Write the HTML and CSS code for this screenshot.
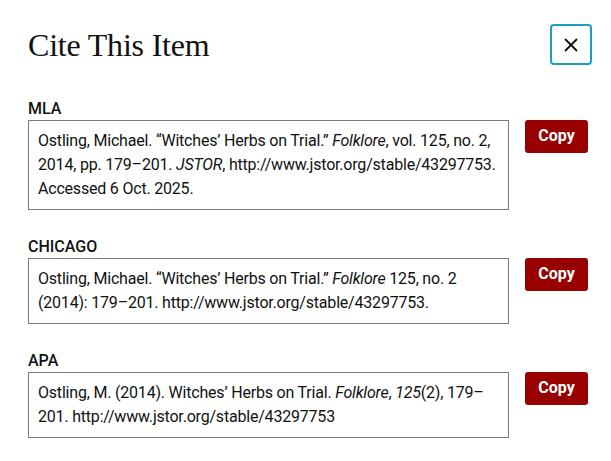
FILE: index.html
```html
<!DOCTYPE html>
<html lang="en">
<head>
<meta charset="utf-8">
<title>Cite This Item</title>
<link rel="stylesheet" href="styles.css">
</head>
<body>
<div class="dialog">
  <header class="header">
    <h1 class="title">Cite This Item</h1>
    <button class="close" aria-label="Close">
      <svg width="16" height="16" viewBox="0 0 16 16"><path d="M2 2 L14 14 M14 2 L2 14" stroke="#111" stroke-width="1.8" fill="none"/></svg>
    </button>
  </header>
  <section class="cite">
    <h2 class="label">MLA</h2>
    <div class="row">
      <div class="box">Ostling, Michael. “Witches’ Herbs on Trial.” <i>Folklore</i>, vol. 125, no. 2, 2014, pp. 179–201. <i>JSTOR</i>, http://www.jstor.org/stable/43297753. Accessed 6 Oct. 2025.</div>
      <button class="copy">Copy</button>
    </div>
  </section>
  <section class="cite">
    <h2 class="label">CHICAGO</h2>
    <div class="row">
      <div class="box">Ostling, Michael. “Witches’ Herbs on Trial.” <i>Folklore</i> 125, no. 2 (2014): 179–201. http://www.jstor.org/stable/43297753.</div>
      <button class="copy">Copy</button>
    </div>
  </section>
  <section class="cite">
    <h2 class="label">APA</h2>
    <div class="row">
      <div class="box">Ostling, M. (2014). Witches’ Herbs on Trial. <i>Folklore</i>, <i>125</i>(2), 179–201. http://www.jstor.org/stable/43297753</div>
      <button class="copy">Copy</button>
    </div>
  </section>
</div>
</body>
</html>
```
FILE: styles.css
```css
html, body { margin: 0; padding: 0; background: #fff; }
body { font-family: Roboto, "Liberation Sans", sans-serif; color: #111; }
.dialog { padding: 24px 19px 0 28px; }
.header { display: flex; justify-content: space-between; align-items: center; height: 41px; margin-bottom: 32px; }
.title { margin: 2px 0 0; font-family: "Liberation Serif", serif; font-weight: 400; font-size: 32px; letter-spacing: -0.2px; color: #111; }
.close { width: 42px; height: 41px; box-sizing: border-box; border: 2px solid #1a9fc0; border-radius: 4px; background: #fff; display: flex; align-items: center; justify-content: center; padding: 0; }
.cite { margin-bottom: 25px; }
.label { margin: 0 0 1px; padding-top: 2px; font-size: 16px; font-weight: 500; line-height: 20px; letter-spacing: 0; }
.row { display: flex; align-items: flex-start; gap: 16px; }
.box { width: 481px; box-sizing: border-box; border: 1px solid #7a7a7a; padding: 8px 9px; font-size: 16px; line-height: 24px; letter-spacing: -0.2px; }
.copy { width: 63px; height: 33px; background: #990000; color: #fff; border: 0; border-radius: 3px; font-family: Roboto, sans-serif; font-weight: 700; font-size: 16px; letter-spacing: 0; padding: 0 0 2px; margin-right: 4px; }
```
